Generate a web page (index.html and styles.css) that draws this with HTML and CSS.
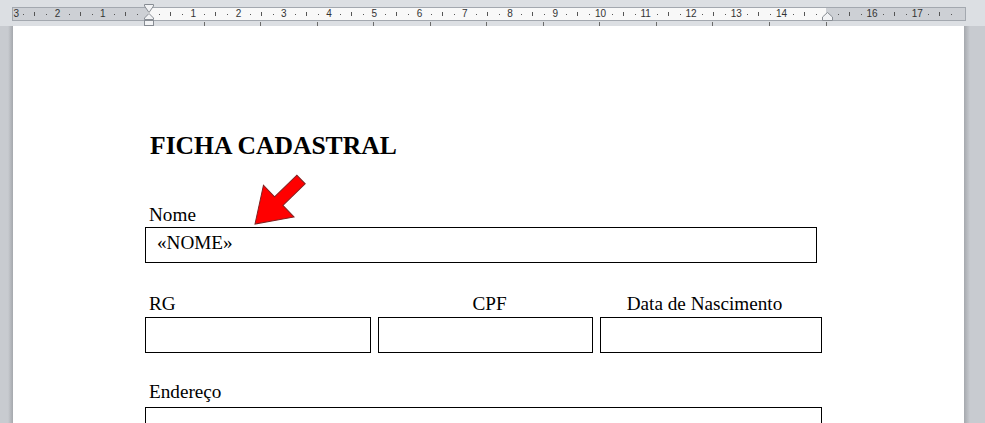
FILE: index.html
```html
<!DOCTYPE html>
<html lang="pt-BR">
<head>
    <meta charset="UTF-8">
    <meta name="viewport" content="width=device-width, initial-scale=1.0">
    <title>Ficha Cadastral</title>
    <link rel="stylesheet" href="styles.css">
</head>
<body>
    <!-- Ruler -->
    <div class="top-bar">
        <div class="ruler">
            <div class="ruler-margin ruler-left"></div>
            <div class="ruler-text"></div>
            <div class="ruler-margin ruler-right"></div>
            <div class="scale">
                <div class="cm"><span class="num num-edge">3</span></div>
                <div class="cm"><span class="num">2</span></div>
                <div class="cm"><span class="num">1</span></div>
                <div class="cm"><span class="num"></span></div>
                <div class="cm"><span class="num">1</span></div>
                <div class="cm"><span class="num">2</span></div>
                <div class="cm"><span class="num">3</span></div>
                <div class="cm"><span class="num">4</span></div>
                <div class="cm"><span class="num">5</span></div>
                <div class="cm"><span class="num">6</span></div>
                <div class="cm"><span class="num">7</span></div>
                <div class="cm"><span class="num">8</span></div>
                <div class="cm"><span class="num">9</span></div>
                <div class="cm"><span class="num">10</span></div>
                <div class="cm"><span class="num">11</span></div>
                <div class="cm"><span class="num">12</span></div>
                <div class="cm"><span class="num">13</span></div>
                <div class="cm"><span class="num">14</span></div>
                <div class="cm"><span class="num"></span></div>
                <div class="cm"><span class="num">16</span></div>
                <div class="cm"><span class="num">17</span></div>
            </div>
        </div>
        <div class="tab-stops">
            <div class="tab"></div><div class="tab"></div><div class="tab"></div>
            <div class="tab"></div><div class="tab"></div><div class="tab"></div>
            <div class="tab"></div><div class="tab"></div><div class="tab"></div>
            <div class="tab"></div><div class="tab"></div><div class="tab"></div>
        </div>
        <svg class="indent indent-left" width="10" height="22" viewBox="0 0 10 22">
            <polygon points="0.5,0.5 9.5,0.5 9.5,2 5,8.5 0.5,2" />
            <polygon points="5,9.5 9.5,14 9.5,15.5 0.5,15.5 0.5,14" />
            <rect x="0.5" y="16.5" width="9" height="5" />
        </svg>
        <svg class="indent indent-right" width="11" height="9" viewBox="0 0 11 9">
            <polygon points="5.5,0.5 10.5,5 10.5,8.5 0.5,8.5 0.5,5" />
        </svg>
    </div>

    <!-- Document -->
    <div class="workspace">
        <div class="side side-left"></div>
        <div class="page">
            <svg class="arrow" width="90" height="70" viewBox="0 0 90 70">
                <polygon transform="translate(17,58) rotate(-44)" points="0,0 33,-22 33,-6 64,-6 64,6 33,6 33,22" />
            </svg>

            <h1 class="title">FICHA CADASTRAL</h1>

            <div class="group group-name">
                <div class="label">Nome</div>
                <div class="field field-name">«NOME»</div>
            </div>

            <div class="docs">
                <div class="label">RG</div>
                <div class="label label-cpf">CPF</div>
                <div class="label label-birth">Data de Nascimento</div>
                <div class="field"></div>
                <div class="field"></div>
                <div class="field"></div>
            </div>

            <div class="group group-address">
                <div class="label">Endereço</div>
                <div class="field field-address"></div>
            </div>
        </div>
        <div class="side side-right"></div>
    </div>
</body>
</html>
```

FILE: styles.css
```css
body {
    margin: 0;
    width: 985px;
    height: 423px;
    overflow: hidden;
    background-color: #c8cbd0;
    font-family: "Liberation Serif", "Times New Roman", serif;
    color: #000;
}

/* ruler */
.top-bar {
    position: relative;
    height: 26px;
    padding-top: 7px;
    box-sizing: border-box;
    background-color: #dcdfe3;
    overflow: hidden;
}
.ruler {
    position: relative;
    display: flex;
    margin-left: 12px;
    width: 954px;
    height: 14px;
    box-sizing: border-box;
    border: 1px solid #a3a8af;
    overflow: hidden;
}
.ruler-margin {
    background-color: #cdd0d5;
}
.ruler-left {
    width: 135px;
}
.ruler-text {
    width: 678px;
    background-color: #f8f8f8;
}
.ruler-right {
    flex: 1;
}
.scale {
    position: absolute;
    top: 0;
    bottom: 0;
    left: -0.75px;
    display: flex;
}
.cm {
    flex: none;
    width: 45.25px;
    background:
        linear-gradient(#555, #555) 11px 6px / 1px 1px no-repeat,
        linear-gradient(#555, #555) 22px 4px / 1px 4px no-repeat,
        linear-gradient(#555, #555) 34px 6px / 1px 1px no-repeat;
}
.num {
    display: block;
    width: 20px;
    margin-left: -10px;
    text-align: center;
    font: 10px/12px "Liberation Sans", Arial, sans-serif;
    color: #333;
}
.num-edge {
    margin-left: -6px;
}
.tab-stops {
    display: flex;
    margin: 1px 0 0 148px;
    height: 4px;
}
.tab {
    flex: none;
    width: 56.56px;
    box-sizing: border-box;
    border-right: 1px solid #6b6b6b;
}
.indent {
    position: absolute;
    fill: #f2f3f5;
    stroke: #878c93;
    stroke-width: 1;
}
.indent-left {
    left: 144px;
    top: 4px;
}
.indent-right {
    left: 822px;
    top: 12px;
}

/* document area */
.workspace {
    display: flex;
    height: 397px;
}
.side-left {
    width: 13px;
    background: linear-gradient(to right, #c8cbd0 0, #c8cbd0 8px, #a5a8ad 13px);
}
.side-right {
    flex: 1;
    background: linear-gradient(to right, #a5a8ad 0, #c8cbd0 6px);
}
.page {
    position: relative;
    flex: none;
    width: 951px;
    padding: 105px 0 0 132px;
    box-sizing: border-box;
    background-color: #fff;
}
.arrow {
    position: absolute;
    left: 225px;
    top: 140px;
    fill: #ff0000;
    stroke: #7f2020;
    stroke-width: 1;
}
.title {
    margin: 0 0 43px;
    padding-left: 5px;
    font-size: 25.6px;
    line-height: 30px;
    font-weight: bold;
}
.label {
    padding-left: 4px;
    font-size: 19.2px;
    line-height: 22px;
}
.field {
    height: 36px;
    box-sizing: border-box;
    border: 1px solid #000;
    padding: 4px 11px;
    font-size: 19.2px;
    line-height: 22px;
}
.group-name .label {
    margin-bottom: 1px;
}
.field-name {
    width: 672px;
}
.docs {
    display: grid;
    grid-template-columns: 226px 215px 222px;
    column-gap: 7px;
    row-gap: 2.5px;
    margin-top: 29.5px;
}
.label-cpf {
    text-align: center;
    padding-left: 8px;
}
.label-birth {
    text-align: center;
    padding: 0 13px 0 0;
}
.group-address {
    margin-top: 28px;
}
.group-address .label {
    margin-bottom: 3.5px;
}
.field-address {
    width: 677px;
}
```
